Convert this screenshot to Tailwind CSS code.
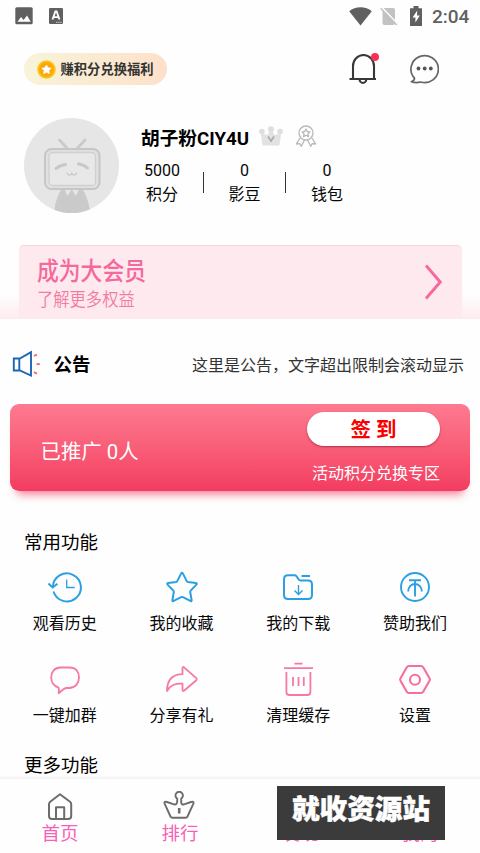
<!DOCTYPE html>
<html lang="zh-CN">
<head>
<meta charset="utf-8">
<meta name="viewport" content="width=device-width, initial-scale=1">
<title>我的</title>
<script src="https://cdn.jsdelivr.net/npm/@tailwindcss/browser@4"></script>
</head>
<body class="bg-white">
<div class="relative flex h-[853px] w-[480px] flex-col overflow-hidden bg-[#fefefe] font-['Roboto','Noto_Sans_CJK_SC',sans-serif] text-[16px] leading-6 text-[#080808]">

  <!-- Status bar -->
  <div class="flex h-8 shrink-0 items-center justify-between pl-[15px] pr-[11px] text-[#606060]">
    <div class="flex items-center gap-4">
      <svg class="h-[18px] w-[18px]" viewBox="0 0 18 18"><rect x="0.3" y="0.2" width="17.4" height="17" rx="1.5" fill="#606060"/><path d="M2.5 14.7 6 10l2.6 3L12 8.6l3.7 6.1z" fill="#fff"/></svg>
      <svg class="h-4 w-[14px]" viewBox="0 0 14 16"><rect width="14" height="16" rx="1.2" fill="#606060"/><path d="M3.5 11.5 6.4 3.5h1.2l2.9 8M4.6 9.2h4.8" fill="none" stroke="#fff" stroke-width="1.8"/><path d="M7 14.3h6" stroke="#ccc" stroke-width="1" stroke-dasharray="1.5 .6"/></svg>
    </div>
    <div class="flex items-center">
      <svg class="h-[19px] w-[23px]" viewBox="0 0 23 19"><path d="M.2 4.3C6-1 17-1 22.8 4.3L11.5 18.6z" fill="#606060"/></svg>
      <svg class="ml-[8px] h-[19px] w-[18px]" viewBox="0 0 18 19"><path d="M4 1h9q2 0 2 2v13q0 2-2 2H4.500Q2.500 18 2.500 16V3z" fill="#c2c2c2"/><path d="M2 .6 17.600 17" stroke="#fefefe" stroke-width="1.600"/><path d="M.6 1.2 16.800 18" stroke="#c0c0c0" stroke-width="1.400"/></svg>
      <svg class="ml-[12px] h-5 w-3" viewBox="0 0 12 20"><path d="M0 2.2h3.5V0h5v2.2H12V20H0z" fill="#606060"/><path d="M7.2 4.5 2.6 11.4h2.8v5.2l4.4-7H7z" fill="#fff"/></svg>
      <span class="ml-[10px] mt-px w-[37px] text-[19px] font-medium leading-8">2:04</span>
    </div>
  </div>

  <!-- Toolbar -->
  <div class="mt-[21px] flex h-8 shrink-0 items-center pl-6">
    <div class="flex h-8 w-[143px] items-center rounded-full bg-linear-to-r from-[#f7f4da] to-[#fee0ca] pl-[13px]">
      <svg class="h-[19px] w-[19px]" viewBox="0 0 19 19"><circle cx="9.5" cy="9.5" r="9.3" fill="#fcc419"/><circle cx="9.5" cy="9.5" r="7.4" fill="#fba90a"/><path d="m9.5 5 1.4 2.8 3.1.5-2.2 2.2.5 3.1-2.8-1.4-2.8 1.4.5-3.1L5 8.300l3.100-.5z" fill="#fff" stroke="#fff" stroke-width=".8" stroke-linejoin="round"/></svg>
      <span class="ml-[4.500px] mt-px whitespace-nowrap text-[13.300px] font-bold text-[#333]">赚积分兑换福利</span>
    </div>
    <svg class="ml-[181px] h-[34px] w-[32px]" viewBox="0 0 32 34"><path d="M5 27V14a10.500 11 0 0 1 21 0v13M1.500 27h26.500" fill="none" stroke="#383838" stroke-width="2.100"/><path d="M11.500 27.500a3.400 3.400 0 0 0 6.800 0" fill="none" stroke="#383838" stroke-width="2"/><circle cx="27" cy="5" r="4" fill="#fd3053"/></svg>
    <svg class="ml-[28.500px] h-[30px] w-[30px]" viewBox="0 0 30 30"><path d="M5.500 24.200A13.700 13.500 0 1 1 11.500 28C8.500 28.800 5.500 28.700 2.300 27.700 4.400 27 5.500 25.800 5.500 24.200z" fill="none" stroke="#666" stroke-width="1.700" stroke-linejoin="round"/><g fill="#555"><circle cx="9.500" cy="14.500" r="1.900"/><circle cx="15.700" cy="14.500" r="1.900"/><circle cx="21.800" cy="14.500" r="1.900"/></g></svg>
  </div>

  <!-- Profile -->
  <div class="mt-[32px] flex h-[96px] shrink-0 pl-6">
    <svg class="mt-[0.500px] h-[95px] w-[95px] shrink-0" viewBox="0 0 95 95"><defs><clipPath id="av"><circle cx="47.500" cy="47.500" r="47.500"/></clipPath></defs><g clip-path="url(#av)"><rect width="95" height="95" fill="#e6e6e6"/><path d="M38 70h20c4 7 7 14 8 25H30c1-11 4-18 8-25z" fill="#cacaca"/><path d="m40 70 3.500 8 4.200-7 4.300 7 3.500-8z" fill="#e6e6e6"/><path d="m35.500 22 7 7.500M61 22l-7 7.500" stroke="#cacaca" stroke-width="2.800" stroke-linecap="round"/><rect x="21" y="31" width="54.500" height="40" rx="6.500" fill="#e0e0e0" stroke="#c6c6c6" stroke-width="2"/><rect x="25" y="34.500" width="46.500" height="33" rx="4" fill="#e8e8e8" stroke="#d0d0d0" stroke-width="1.300"/><path d="M32 50.500c3-2.500 5-3.500 9.500-4M54.500 46c4 .5 6.500 1.700 9 4" fill="none" stroke="#c8c8c8" stroke-width="3" stroke-linecap="round"/><path d="M43 54.500c.5 3.500 4.500 3.500 4.700 0 .4 3.500 4.300 3.500 4.800 0" fill="none" stroke="#cacaca" stroke-width="1.300"/></g></svg>
    <div class="ml-[22px]">
      <div class="mt-[8px] flex h-6 items-center">
        <span class="mt-[3px] w-[108px] whitespace-nowrap text-[18.700px] font-bold text-black">胡子粉CIY4U</span>
        <svg class="ml-[10px] mb-[3px] h-5 w-6" viewBox="0 0 24 20"><path d="M4 19 2.500 8l6 1.500L12 4l3.500 5.500 6-1.500L20 19z" fill="#e2e2e2" stroke="#e2e2e2" stroke-linejoin="round"/><g fill="#dedede"><circle cx="3" cy="5.500" r="2.800"/><circle cx="12" cy="3.200" r="3"/><circle cx="21" cy="5.500" r="2.800"/></g><path d="m9 10.500 3 4.500 3-4.500" fill="none" stroke="#aaa" stroke-width="1.700"/></svg>
        <svg class="ml-[12px] mb-[2px] h-[22px] w-[22px]" viewBox="0 0 22 22" fill="none" stroke="#b8b8b8" stroke-width="1.300" stroke-linejoin="round"><circle cx="11" cy="8" r="7"/><path d="m11 4 1.200 2.500 2.700.4-1.900 2 .4 2.700-2.400-1.300-2.400 1.300.4-2.700-1.900-2 2.700-.4zM5 13l-3.700 6 3.400-.3 1.600 2.600L9.500 15M17 13l3.700 6-3.400-.3-1.600 2.600L12.500 15"/></svg>
      </div>
      <div class="mt-[9px] flex items-center">
        <div class="flex w-[42px] translate-y-px flex-col items-center"><span>5000</span><span>积分</span></div>
        <div class="ml-[20px] h-[21px] w-px bg-[#333]"></div>
        <div class="ml-[20px] flex w-[41px] translate-y-px flex-col items-center"><span>0</span><span>影豆</span></div>
        <div class="ml-[20px] h-[21px] w-px bg-[#333]"></div>
        <div class="ml-[20px] flex w-[42px] translate-y-px flex-col items-center"><span>0</span><span>钱包</span></div>
      </div>
    </div>
  </div>

  <!-- Membership banner -->
  <div class="mt-[32px] flex h-[74px] shrink-0 bg-linear-to-b from-[#fefefe] from-65% to-[#feebef] px-[18.500px]">
    <div class="flex grow items-center justify-between rounded-t-[5px] border-t border-[#fbd3dc] bg-[#feeaee] pl-[18.500px] pr-[20px]">
      <div class="mt-[6px] flex flex-col text-[#f5689c]">
        <span class="origin-center scale-y-[1.13] text-[21.800px] font-medium leading-[27px]">成为大会员</span>
        <span class="mt-[2px] scale-y-[1.13] text-[16.300px] font-[350] leading-[26px] text-[#f27ba4]">了解更多权益</span>
      </div>
      <svg class="-mt-[2px] h-9 w-[18px]" viewBox="0 0 18 36"><path d="M2 1.500 16.200 18 2 34.500" fill="none" stroke="#f7699c" stroke-width="2.900"/></svg>
    </div>
  </div>

  <!-- Announcement -->
  <div class="flex h-[84px] shrink-0 items-center pl-[12px] pr-[16px]">
    <svg class="mt-[5px] h-7 w-[29px]" viewBox="0 0 29 28"><path d="M1.800 8.500v12h6l11.200 5V2.200L7.800 8.500zM7.300 8.500v12" fill="none" stroke="#1c66b5" stroke-width="1.900"/><path d="m22 6 3-1.500M24.500 14.200h3.300M22 22l3 1.800" stroke="#f4645d" stroke-width="1.800"/></svg>
    <span class="ml-[12.500px] mt-[8px] text-[18.500px] font-bold text-black">公告</span>
    <span class="ml-auto mt-[9px] whitespace-nowrap text-[#333]">这里是公告，文字超出限制会滚动显示</span>
  </div>

  <!-- Promotion card -->
  <div class="mx-[10px] mt-[0.500px] flex h-[87px] shrink-0 justify-between rounded-[9px] bg-linear-to-b from-[#fd7a90] to-[#f33b60] pl-[30.500px] pr-[30px] text-white shadow-[0_10px_10px_-7px_rgba(243,59,96,0.7)]">
    <span class="mt-[34px] text-[20.400px] leading-7">已推广 0人</span>
    <div class="flex flex-col items-end">
      <div class="mt-[8px] flex h-[34.500px] w-[133px] items-center justify-center rounded-full bg-white pt-[2px] text-[20.500px] font-bold text-[#fb0000] shadow-[0_1px_2px_rgba(120,0,30,0.5)]">签 到</div>
      <span class="mt-[15.500px]">活动积分兑换专区</span>
    </div>
  </div>

  <!-- Common functions -->
  <h2 class="ml-6 mt-[38px] h-7 shrink-0 text-[18.500px] leading-7 text-black">常用功能</h2>
  <div class="mt-[13px] grid shrink-0 grid-cols-4 gap-y-[26px] pl-[6.500px] pr-[6.500px]">
    <div class="flex flex-col items-center">
      <svg class="h-[34px] w-[34px]" viewBox="0 0 34 34" fill="none" stroke="#2a9fe3" stroke-width="2"><path d="M4.900 17A14 14 0 1 1 5.500 21.500"/><path d="m.4 13.500 4.300 4 4.700-3.800"/><path d="M18.700 9.500v8h8" stroke-width="1.300"/></svg>
      <span class="mt-[8px]">观看历史</span>
    </div>
    <div class="flex flex-col items-center">
      <svg class="h-[34px] w-[34px]" viewBox="0 0 34 34" fill="none" stroke="#2a9fe3" stroke-width="2" stroke-linejoin="round"><path d="M16.200 3.400Q17 2 17.800 3.400l3.800 7.500q.4.800 1.300 1l8 1.200q1.600.3.500 1.500l-5.700 6q-.6.600-.5 1.400l1.400 8q.2 1.700-1.300.9l-7.400-3.700q-.9-.4-1.800 0l-7.400 3.700q-1.500.8-1.300-.9l1.400-8q.1-.8-.5-1.400l-5.700-6q-1.100-1.200.5-1.500l8-1.200q.9-.2 1.300-1z"/></svg>
      <span class="mt-[8px]">我的收藏</span>
    </div>
    <div class="flex flex-col items-center">
      <svg class="h-[34px] w-[34px]" viewBox="0 0 34 34" fill="none" stroke="#2a9fe3" stroke-width="2"><path d="M7 5.200h6.500q1.300 0 2 1l2.200 3.300q.6.900 1.800.9H27q4 0 4 4v10.500q0 4-4 4H7q-4 0-4-4V9.200q0-4 4-4zM20.500 6H29"/><path d="M17.500 15v9.500m-4-4 4 4 4-4" stroke-width="1.400"/></svg>
      <span class="mt-[8px]">我的下载</span>
    </div>
    <div class="flex flex-col items-center">
      <svg class="h-[34px] w-[34px]" viewBox="0 0 34 34" fill="none" stroke="#2a9fe3" stroke-width="1.900"><circle cx="17" cy="17" r="14"/><path d="M11 10.200h12M17 10.500v16M10.200 21.500c0-10 13.600-10 13.600 0"/></svg>
      <span class="mt-[8px]">赞助我们</span>
    </div>
    <div class="flex flex-col items-center">
      <svg class="h-[35px] w-[34px]" viewBox="0 0 34 35" fill="none" stroke="#f8799f" stroke-width="1.800" stroke-linejoin="round"><path d="M12.500 5.500h9C28 5.500 31 10 31 15.500S27.500 26 21 26h-3c-2.500.6-4.500 3.200-7.300 5.200q.8-3.200-.2-5.500C6 24 3.200 20.200 3.200 15.500 3.200 10 6.500 5.500 12.500 5.500z"/></svg>
      <span class="mt-[7.500px]">一键加群</span>
    </div>
    <div class="flex flex-col items-center">
      <svg class="h-[35px] w-[34px]" viewBox="0 0 34 35" fill="none" stroke="#f8799f" stroke-width="1.800" stroke-linejoin="round"><path d="M17.500 6v6.200C8 12.400 2 17.500 2 29c3.500-6 8-7.500 15.500-7.300V28q.1 1.600 1.500.7l12.300-10.500q1-1 0-2L19 5.300q-1.400-.9-1.500.7z"/></svg>
      <span class="mt-[7.500px]">分享有礼</span>
    </div>
    <div class="flex flex-col items-center">
      <svg class="h-[35px] w-[34px]" viewBox="0 0 34 35" fill="none" stroke="#f8799f" stroke-width="1.800"><path d="M13.500 1.600h8M3 6.200h29M5.400 10v20q0 3 3 3h18q3 0 3-3V10M12 15v9M17.500 15v9M22.800 15v9"/></svg>
      <span class="mt-[7.500px]">清理缓存</span>
    </div>
    <div class="flex flex-col items-center">
      <svg class="h-[35px] w-[34px]" viewBox="0 0 34 35" fill="none" stroke="#f66f9b" stroke-width="2.100" stroke-linejoin="round"><path d="M11 4h12q1.500 0 2.200 1.200l6.300 11q.8 1.300 0 2.600l-6.300 11Q24.500 31 23 31H11q-1.500 0-2.200-1.200l-6.300-11q-.8-1.300 0-2.600l6.300-11Q9.500 4 11 4z"/><circle cx="17" cy="17.700" r="5"/></svg>
      <span class="mt-[7.500px]">设置</span>
    </div>
  </div>
  <h2 class="ml-6 mt-[24px] h-7 shrink-0 text-[18.500px] leading-7 text-black">更多功能</h2>

  <!-- Bottom navigation -->
  <nav class="absolute inset-x-0 bottom-0 grid h-[75px] grid-cols-4 border-t border-[#f4f4f4] bg-[#fefefe] text-[18.500px] text-[#f95fb6] shadow-[0_-1px_2px_rgba(0,0,0,0.05)]">
    <div class="flex flex-col items-center pt-[12px]">
      <svg class="h-[30px] w-8" viewBox="0 0 32 30" fill="none" stroke="#6c6c6c" stroke-width="2" stroke-linejoin="round"><path d="M16 3.300 26 10.800q1.200 1 1.200 2.500V25q0 3-3 3H8q-3 0-3-3V13.300Q5 11.800 6.200 10.800zM12 28V16.300h8.200V28"/></svg>
      <span class="mt-px">首页</span>
    </div>
    <div class="flex flex-col items-center pt-[12px]">
      <svg class="h-[30px] w-8 -translate-x-px" viewBox="0 0 32 30" fill="none" stroke="#6c6c6c" stroke-width="1.900" stroke-linejoin="round"><path d="M14.200 7.600a3.700 3.700 0 1 1 4 0v3.500q.3 3 2.800 2.200l7-2.300q3-.8 2.500 1.300l-6 13.200q-.6 1.200-2 1.200h-13q-1.400 0-2-1.200l-6-13.200q-.5-2.100 2.500-1.300l7 2.300q2.600.8 3.200-2.200z"/><path d="M16.200 17v5.500" stroke-width="2.600"/></svg>
      <span class="mt-px">排行</span>
    </div>
    <div class="flex flex-col items-center pt-[43px]"><span>发现</span></div>
    <div class="flex flex-col items-center pt-[43px]"><span>我的</span></div>
  </nav>
  <div class="absolute left-[277px] top-[785.500px] flex h-[54px] w-[168px] justify-center bg-[#3b3b3b] pt-[7px] text-[27.600px] font-black leading-[34px] text-white [-webkit-text-stroke:0.500px_#fff]">就收资源站</div>
</div>
</body>
</html>
